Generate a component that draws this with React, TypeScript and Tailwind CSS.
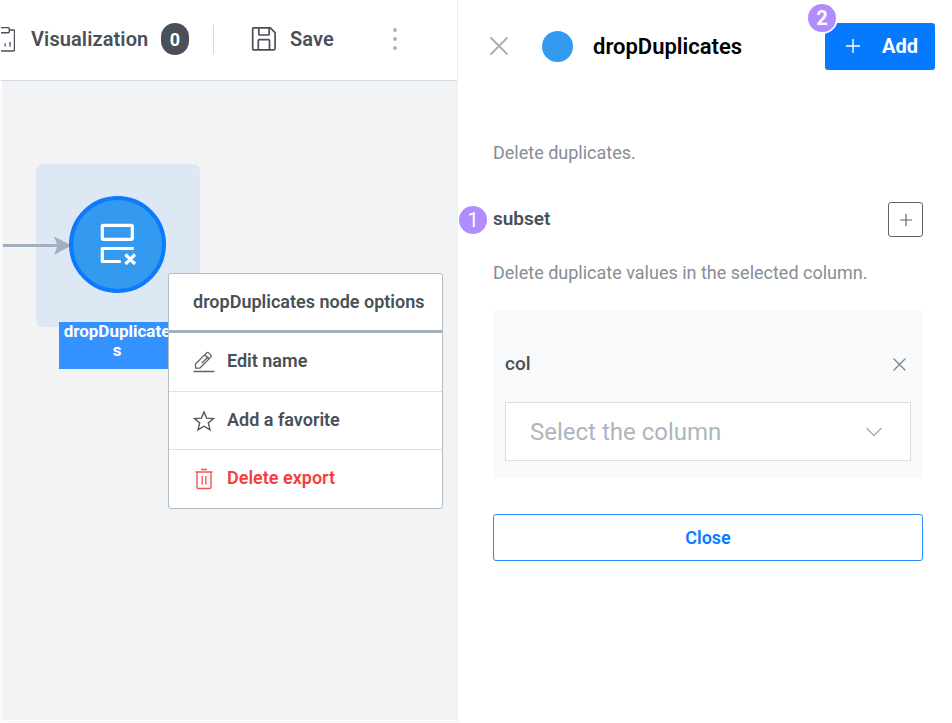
import type { ReactNode } from "react";

function Badge({ children }: { children: ReactNode }) {
  return (
    <span className="flex h-7 w-7 items-center justify-center rounded-full bg-[#b18cff] text-[20px] leading-none text-white">
      {children}
    </span>
  );
}

function Toolbar() {
  return (
    <header className="flex h-[81px] shrink-0 items-center border-b border-[#d3d8df] bg-white pb-[2px] text-[20px] font-semibold text-[#495057]">
      <svg width="14" height="28" viewBox="0 0 14 28" fill="none" stroke="#495057" strokeWidth="1.4" className="shrink-0">
        <path d="M0 2.6h7.3q1 0 1 1v3.2q0 1-1 1H0M8.3 5h4.2q1 0 1 1v19q0 1-1 1H0" />
        <path d="M4.2 18.5v3M9 17v4.5" strokeWidth="1.6" stroke="#687078" />
      </svg>
      <span className="ml-4 w-[119px] whitespace-nowrap tracking-[0.1px]">Visualization</span>
      <span className="ml-[11px] flex h-8 w-7 items-center justify-center rounded-full bg-[#495057] text-[18px] font-bold text-white">
        0
      </span>
      <span className="ml-6 h-[29px] w-px bg-[#d3d8df]" />
      <svg width="26" height="26" viewBox="0 0 26 26" fill="none" stroke="#495057" strokeWidth="1.7" strokeLinejoin="round" className="ml-[37px] shrink-0">
        <path d="M2.2 1.9h17.2l4.7 4.7v16q0 1.3-1.3 1.3H3q-1.3 0-1.3-1.3V2.9q0-1 .5-1Z" />
        <path d="M7.8 2v6q0 1 1 1h8.4q1 0 1-1V2M7.3 24V14.6q0-1 1-1h9.2q1 0 1 1V24" />
      </svg>
      <span className="ml-[13px] w-[46px] tracking-[0.1px]">Save</span>
      <span className="ml-[57px] flex flex-col gap-[5px]">
        <i className="h-1 w-1 rounded-full bg-[#adb5bd]" />
        <i className="h-1 w-1 rounded-full bg-[#adb5bd]" />
        <i className="h-1 w-1 rounded-full bg-[#adb5bd]" />
      </span>
    </header>
  );
}

function MenuItem({ icon, label, className }: { icon: ReactNode; label: string; className: string }) {
  return (
    <div className={`flex items-center gap-3 pl-6 ${className}`}>
      {icon}
      <span>{label}</span>
    </div>
  );
}

function NodeMenu() {
  return (
    <div className="absolute left-[166px] top-[192px] h-[236px] w-[275px] rounded-[3px] border border-[#b4bcc4] bg-white text-[18px] font-semibold leading-6 text-[#495057]">
      <div className="flex h-[59px] items-center border-b-[3px] border-[#a6b0ba] pl-6 whitespace-nowrap">
        dropDuplicates node options
      </div>
      <MenuItem
        label="Edit name"
        className="h-[59px] border-b border-[#dee2e6] pb-[2px]"
        icon={
          <svg width="22" height="22" viewBox="0 0 22 22" fill="none" stroke="#5c646c" strokeWidth="1.3" strokeLinejoin="round" strokeLinecap="round" className="relative top-px">
            <path d="M2.5 17.2V13L13.6 1.9q1-1 2 0l2.2 2.2q1 1 0 2L6.7 17.2ZM11.7 3.8l4.2 4.2M15 6 9.2 11.800M1 20.500h20" />
          </svg>
        }
      />
      <MenuItem
        label="Add a favorite"
        className="h-[58px] border-b border-[#dee2e6] pb-[2px]"
        icon={
          <svg width="22" height="22" viewBox="0 0 22 22" fill="none" stroke="#495057" strokeWidth="1.3" strokeLinejoin="miter" className="relative top-px">
            <path d="m11 2 2.600 6.100 6.900.5-5.200 4.500 1.700 6.700-6-3.600-6 3.600 1.700-6.700L1.500 8.600l6.900-.5Z" />
          </svg>
        }
      />
      <MenuItem
        label="Delete export"
        className="h-[58px] pb-[2px] text-[#f63d3d]"
        icon={
          <svg width="22" height="22" viewBox="0 0 22 22" fill="none" stroke="#fa5252" strokeWidth="1.4" className="relative top-px">
            <path d="M2.500 4h17M8 1.500h6M4 4v15.300q0 1.200 1.200 1.200h11.600q1.200 0 1.200-1.200V4M9.200 8v8.500M12.800 8v8.500" />
          </svg>
        }
      />
    </div>
  );
}

function Canvas() {
  return (
    <main className="relative flex-1 overflow-hidden border-l-2 border-[#f7f8fa] bg-[#f1f3f5]">
      <div className="absolute -left-px top-0 h-full w-full">
        <div className="absolute left-[34px] top-[83px] h-[163px] w-[164px] rounded-[7px] bg-[#dde8f4]" />
        <svg className="absolute -left-px top-[150px]" width="72" height="30" viewBox="0 0 72 30" fill="#a1b0c0">
          <path d="M0 13h60v3H0ZM53 5.500l17.500 9L53 24l3.500-9.500Z" />
        </svg>
        <div className="absolute left-[67px] top-[115px] flex h-[97px] w-[97px] items-center justify-center rounded-full border-[4.500px] border-[#0a7aff] bg-[#339af0]">
          <svg width="40" height="44" viewBox="0 0 40 44" fill="none" stroke="white" strokeWidth="3.200" strokeLinejoin="round">
            <rect x="4.300" y="2.300" width="30" height="14" rx="1" />
            <path d="M35.700 25.500H4.300v13h18.500M27.500 31.500l9.500 9.500M37 31.500l-9.500 9.500" />
          </svg>
        </div>
        <div className="absolute left-[57px] top-[241px] h-[47px] w-[116px] bg-[#3392ff] text-center text-[17px] font-bold leading-[19px] text-white">
          dropDuplicate
          <br />s
        </div>
      </div>
      <div className="absolute -left-px top-0">
        <NodeMenu />
      </div>
      <div className="absolute bottom-px left-0 h-px w-full bg-white" />
    </main>
  );
}

function Panel() {
  return (
    <aside className="flex flex-1 flex-col bg-white pr-[29px] pl-[35px]">
      <header className="-mr-3 flex h-[92px] shrink-0 items-center">
        <svg width="18" height="18" viewBox="0 0 18 18" stroke="#a6afb8" strokeWidth="1.900" strokeLinecap="round" className="ml-[-3px]">
          <path d="m1 1 16 16M17 1 1 17" />
        </svg>
        <span className="ml-[34px] h-[31px] w-[31px] rounded-full bg-[#339af0]" />
        <h1 className="ml-5 text-[22px] font-semibold text-black">dropDuplicates</h1>
        <button className="relative ml-auto flex h-[47px] w-[110px] items-center rounded-[3px] bg-[#057aff] pl-[21px] text-[20px] font-bold text-white">
          <svg width="14" height="14" viewBox="0 0 14 14" stroke="white" strokeWidth="1.400">
            <path d="M7 0v14M0 7h14" />
          </svg>
          <span className="ml-[22px]">Add</span>
          <span className="absolute -left-[19px] -top-[21px] rounded-full border-2 border-white">
            <Badge>2</Badge>
          </span>
        </button>
      </header>
      <p className="mt-[49px] text-[18px] leading-6 text-[#868e96]">Delete duplicates.</p>
      <div className="mt-[37px] flex h-[35px] items-center justify-between">
        <div className="-ml-[34px] flex items-center gap-[6px]">
          <Badge>1</Badge>
          <h2 className="text-[19px] font-semibold text-[#495057]">subset</h2>
        </div>
        <button className="flex h-[35px] w-[35px] items-center justify-center rounded-[3px] border border-[#5d656c]">
          <svg width="12" height="12" viewBox="0 0 12 12" stroke="#5d656c" strokeWidth="1.200">
            <path d="M6 0v12M0 6h12" />
          </svg>
        </button>
      </div>
      <p className="mt-[24px] whitespace-nowrap text-[18px] leading-6 text-[#868e96]">
        Delete duplicate values in the selected column.
      </p>
      <section className="mt-[25px] h-[168px] bg-[#f8f9fb] px-3 pt-[42px]">
        <div className="flex h-6 items-center justify-between pr-[5px] text-[19px] font-medium text-[#495057]">
          <span>col</span>
          <svg width="13" height="13" viewBox="0 0 13 13" stroke="#7b838b" strokeWidth="1.300" strokeLinecap="round">
            <path d="m1 1 11 11M12 1 1 12" />
          </svg>
        </div>
        <div className="mt-[26px] flex h-[59px] items-center justify-between border border-[#d9dde2] bg-white pr-[28px] pl-6 text-[24px] text-[#adb5bd]">
          <span>Select the column</span>
          <svg width="16" height="10" viewBox="0 0 16 10" fill="none" stroke="#a6afb8" strokeWidth="1.500" strokeLinecap="round">
            <path d="m1 1.500 7 7 7-7" />
          </svg>
        </div>
      </section>
      <button className="mt-9 h-[47px] rounded-[3px] border border-[#2b8cff] text-[18px] font-semibold text-[#087aff]">
        Close
      </button>
    </aside>
  );
}

export default function App() {
  return (
    <div className="flex h-[723px] w-[952px] overflow-hidden bg-white font-[Roboto,'Liberation_Sans',sans-serif]">
      <div className="mb-px ml-px flex w-[457px] flex-col border-r border-[#eceff2]">
        <Toolbar />
        <Canvas />
      </div>
      <Panel />
    </div>
  );
}
